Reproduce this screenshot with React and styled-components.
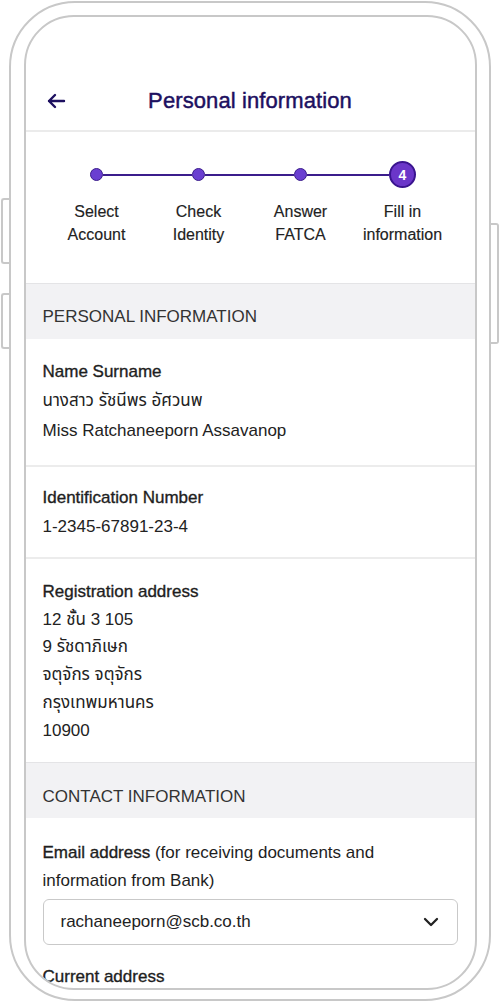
import React from "react";
import styled, { createGlobalStyle } from "styled-components";

const Global = createGlobalStyle`
  html, body { margin: 0; padding: 0; background: #ffffff; }
  body {
    width: 500px;
    height: 1004px;
    overflow: hidden;
    font-family: "Liberation Sans", "Noto Sans", "Noto Sans Thai", "DejaVu Sans", sans-serif;
    color: #222222;
  }
  * { box-sizing: border-box; }
`;

const Device = styled.div`
  position: relative;
  margin: 1px 9px 0 9px;
  width: 482px;
  height: 1000px;
  border: 2.5px solid #c8c8c8;
  border-radius: 66px;
  padding: 11.5px 12.5px 9.5px 12.5px;
  background: #ffffff;
  display: flex;
`;

const SideButton = styled.div`
  position: absolute;
  top: ${(p) => p.$top}px;
  height: ${(p) => p.$h}px;
  width: 8px;
  border: 2px solid #c8c8c8;
  background: #ffffff;
  ${(p) =>
    p.$side === "left"
      ? `left: -10px; border-right: none; border-radius: 3px 0 0 3px;`
      : `right: -10px; border-left: none; border-radius: 0 3px 3px 0;`}
`;

const Screen = styled.div`
  flex: 1;
  border: 2.5px solid #c8c8c8;
  border-radius: 50px;
  overflow: hidden;
  background: #ffffff;
  display: flex;
  flex-direction: column;
`;

const StatusSpace = styled.div`
  height: 55px;
  flex: none;
`;

const Header = styled.div`
  height: 60px;
  flex: none;
  display: flex;
  align-items: center;
  position: relative;
  padding-left: 20px;
  border-bottom: 2px solid #ebebeb;
`;

const BackButton = styled.div`
  width: 20px;
  height: 20px;
  display: flex;
  align-items: center;
  justify-content: center;
`;

const Title = styled.h1`
  flex: 1;
  margin: 0 40px 0 0;
  text-align: center;
  font-size: 22px;
  font-weight: 400;
  -webkit-text-stroke: 0.45px #1d1060;
  color: #1d1060;
  letter-spacing: 0.1px;
`;

const Stepper = styled.div`
  display: grid;
  grid-template-columns: repeat(4, 1fr);
  padding: 30px 21px 37px 20px;
  flex: none;
`;

const Step = styled.div`
  display: flex;
  flex-direction: column;
  align-items: center;
`;

const Track = styled.div`
  height: 26px;
  width: 100%;
  display: flex;
  align-items: center;
`;

const TrackLine = styled.div`
  flex: 1;
  height: 2px;
  background: ${(p) => (p.$hidden ? "transparent" : "#3b1d8c")};
`;

const Dot = styled.div`
  width: 13px;
  height: 13px;
  border-radius: 50%;
  background: #6a3fd1;
  border: 1.5px solid #3b1d8c;
  flex: none;
`;

const ActiveDot = styled.div`
  width: 27px;
  height: 27px;
  border-radius: 50%;
  background: #6b36c9;
  border: 2.5px solid #3a148f;
  color: #ffffff;
  font-weight: 700;
  font-size: 14px;
  display: flex;
  align-items: center;
  justify-content: center;
  flex: none;
`;

const StepLabel = styled.div`
  margin-top: 12px;
  font-size: 16px;
  line-height: 23px;
  text-align: center;
  color: #222222;
  white-space: pre-line;
  -webkit-text-stroke: 0.15px #222222;
`;

const SectionHeader = styled.div`
  flex: none;
  background: #f2f2f4;
  border-top: 1px solid #e4e4e6;
  padding: ${(p) => p.$pt}px 17px ${(p) => p.$pb}px 17px;
  font-size: 17px;
  line-height: 19px;
  color: #333333;
  text-transform: uppercase;
`;

const Field = styled.div`
  flex: none;
  padding: ${(p) => p.$pt}px 17px ${(p) => p.$pb}px 17px;
  border-bottom: ${(p) => (p.$divider ? "2px solid #ececec" : "none")};
`;

const Label = styled.div`
  font-size: 17px;
  line-height: 28px;
  color: #1e1e1e;
  margin-top: ${(p) => p.$mt || 0}px;
`;

const Strong = styled.span`
  -webkit-text-stroke: 0.35px #1e1e1e;
`;

const Value = styled.div`
  font-size: 17px;
  line-height: ${(p) => p.$lh}px;
  color: #222222;
`;

const Select = styled.div`
  margin-top: 3.5px;
  height: 46px;
  border: 1.5px solid #c9c9c9;
  border-radius: 6px;
  display: flex;
  align-items: center;
  justify-content: space-between;
  padding: 0 18px 0 17px;
  font-size: 17px;
  color: #222222;
`;

const Arrow = () => (
  <svg width="20" height="16" viewBox="0 0 20 16" fill="none">
    <path d="M18 8H3M9 2L3 8l6 6" stroke="#1d1060" strokeWidth="2.4" strokeLinecap="round" strokeLinejoin="round" />
  </svg>
);

const Chevron = () => (
  <svg width="16" height="10" viewBox="0 0 16 10" fill="none">
    <path d="M2 2l6 6 6-6" stroke="#222" strokeWidth="2.3" strokeLinecap="round" strokeLinejoin="round" />
  </svg>
);

const steps = ["Select\nAccount", "Check\nIdentity", "Answer\nFATCA", "Fill in\ninformation"];

export default function App() {
  return (
    <>
      <Global />
      <Device>
        <SideButton $side="left" $top={195} $h={66} />
        <SideButton $side="left" $top={290} $h={56} />
        <SideButton $side="right" $top={220} $h={121} />
        <Screen>
          <StatusSpace />
          <Header>
            <BackButton>
              <Arrow />
            </BackButton>
            <Title>Personal information</Title>
          </Header>
          <Stepper>
            {steps.map((s, i) => (
              <Step key={s}>
                <Track>
                  <TrackLine $hidden={i === 0} />
                  {i === steps.length - 1 ? <ActiveDot>4</ActiveDot> : <Dot />}
                  <TrackLine $hidden={i === steps.length - 1} />
                </Track>
                <StepLabel>{s}</StepLabel>
              </Step>
            ))}
          </Stepper>
          <SectionHeader $pt={23} $pb={13}>Personal information</SectionHeader>
          <Field $pt={19} $pb={19} $divider>
            <Label><Strong>Name Surname</Strong></Label>
            <Value $lh={30}>นางสาว รัชนีพร อัศวนพ</Value>
            <Value $lh={30}>Miss Ratchaneeporn Assavanop</Value>
          </Field>
          <Field $pt={17} $pb={16} $divider>
            <Label><Strong>Identification Number</Strong></Label>
            <Value $lh={29}>1-2345-67891-23-4</Value>
          </Field>
          <Field $pt={19} $pb={18}>
            <Label><Strong>Registration address</Strong></Label>
            <Value $lh={27.8}>12 ชั้น 3 105</Value>
            <Value $lh={27.8}>9 รัชดาภิเษก</Value>
            <Value $lh={27.8}>จตุจักร จตุจักร</Value>
            <Value $lh={27.8}>กรุงเทพมหานคร</Value>
            <Value $lh={27.8}>10900</Value>
          </Field>
          <SectionHeader $pt={24} $pb={12}>Contact information</SectionHeader>
          <Field $pt={21} $pb={0}>
            <Label>
              <Strong>Email address</Strong> (for receiving documents and information from Bank)
            </Label>
            <Select>
              <span>rachaneeporn@scb.co.th</span>
              <Chevron />
            </Select>
            <Label $mt={18}><Strong>Current address</Strong></Label>
          </Field>
        </Screen>
      </Device>
    </>
  );
}
